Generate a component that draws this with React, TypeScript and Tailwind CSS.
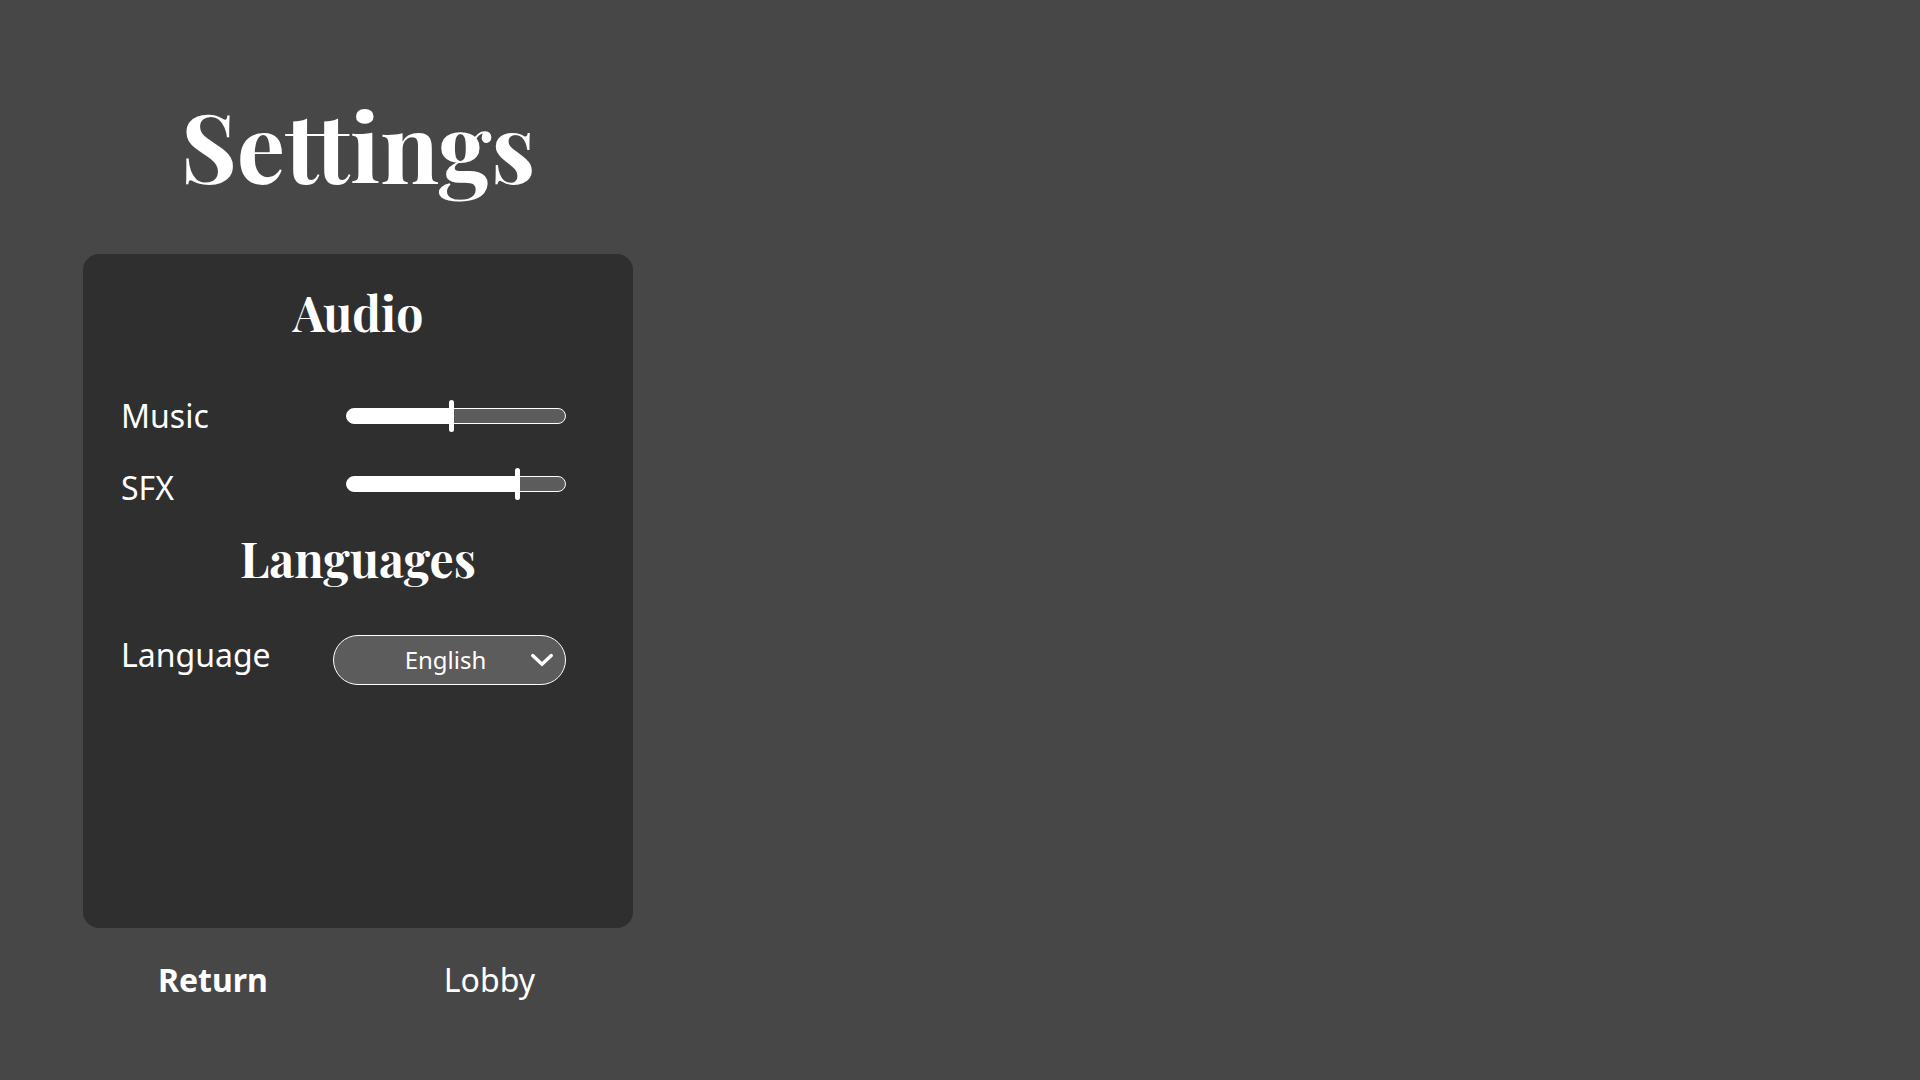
import { useState, type CSSProperties } from "react";

type VolumeSliderProps = {
  id: string;
  label: string;
  initial: number;
  rowClass: string;
};

function VolumeSlider({ id, label, initial, rowClass }: VolumeSliderProps) {
  const [value, setValue] = useState(initial);
  return (
    <div className={`flex justify-between ${rowClass}`}>
      <label htmlFor={id} className="text-[32px] leading-10">
        {label}
      </label>
      <input
        id={id}
        type="range"
        min={0}
        max={100}
        value={value}
        onChange={(e) => setValue(Number(e.target.value))}
        style={{ "--fill": `${value}%` } as CSSProperties}
        className="h-8 w-[220px] cursor-pointer appearance-none bg-transparent [&::-webkit-slider-runnable-track]:h-4 [&::-webkit-slider-runnable-track]:rounded-full [&::-webkit-slider-runnable-track]:border [&::-webkit-slider-runnable-track]:border-white [&::-webkit-slider-runnable-track]:bg-[linear-gradient(to_right,#fff_var(--fill),#5c5c5c_var(--fill))] [&::-webkit-slider-thumb]:-mt-[9px] [&::-webkit-slider-thumb]:h-8 [&::-webkit-slider-thumb]:w-[5px] [&::-webkit-slider-thumb]:appearance-none [&::-webkit-slider-thumb]:rounded-sm [&::-webkit-slider-thumb]:bg-white"
      />
    </div>
  );
}

const headingFont = "font-['Playfair_Display','Liberation_Serif',serif] font-bold text-center";

export default function App() {
  return (
    <div className="min-h-screen bg-[#474747] px-[83px] pt-20 font-['Noto_Sans',sans-serif] text-white">
      <main className="flex w-[550px] max-w-full flex-col">
        <h1 className={`${headingFont} text-8xl leading-[128px]`}>Settings</h1>

        <div className="mt-[46px] min-h-[674px] rounded-2xl bg-[#2f2f2f] pt-[26px] pr-[67px] pl-[38px]">
          <section>
            <h2 className={`${headingFont} -mr-[29px] text-5xl leading-16`}>Audio</h2>
            <div className="mt-[52px] flex flex-col gap-8">
              <VolumeSlider id="music" label="Music" initial={48} rowClass="items-center" />
              <VolumeSlider id="sfx" label="SFX" initial={79} rowClass="items-start" />
            </div>
          </section>

          <section className="mt-[18px]">
            <h2 className={`${headingFont} -mr-[29px] text-5xl leading-16`}>Languages</h2>
            <div className="mt-[45px] flex items-start justify-between">
              <label htmlFor="language" className="text-[32px] leading-10">
                Language
              </label>
              <div className="relative">
                <select
                  id="language"
                  defaultValue="English"
                  className="h-[50px] w-[233px] cursor-pointer appearance-none rounded-full border border-white bg-[#5c5c5c] pr-2 text-center text-2xl [text-align-last:center]"
                >
                  <option>English</option>
                </select>
                <svg
                  aria-hidden="true"
                  viewBox="0 0 24 14"
                  className="pointer-events-none absolute top-[18px] right-3 h-3.5 w-6"
                  fill="none"
                  stroke="currentColor"
                  strokeWidth="3.4"
                  strokeLinecap="round"
                  strokeLinejoin="miter"
                >
                  <path d="M2.7 2.6 12 11.2 21.3 2.6" />
                </svg>
              </div>
            </div>
          </section>
        </div>

        <nav className="mt-8 flex justify-between pr-[98px] pl-[75px] text-[32px] leading-10">
          <button type="button" className="cursor-pointer font-bold">
            Return
          </button>
          <button type="button" className="cursor-pointer">
            Lobby
          </button>
        </nav>
      </main>
    </div>
  );
}
